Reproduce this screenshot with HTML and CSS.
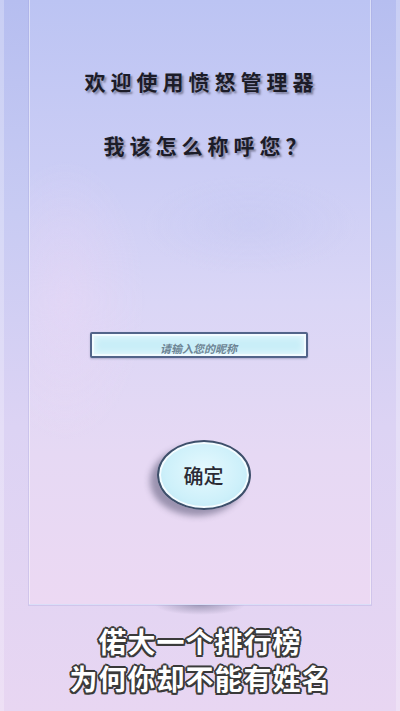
FILE: index.html
```html
<!DOCTYPE html>
<html lang="zh-CN">

<head>
    <meta charset="UTF-8">
    <meta name="viewport" content="width=device-width, initial-scale=1.0">
    <title>愤怒管理器</title>
    <link rel="stylesheet" href="styles.css">
</head>

<body>

    <div class="screen">
        <main class="panel">
            <h1 class="title">欢迎使用愤怒管理器</h1>
            <h2 class="question">我该怎么称呼您？</h2>

            <div class="name-box">
                <input type="text" class="name-input" placeholder="请输入您的昵称">
            </div>

            <div class="confirm-row">
                <button class="confirm">确定</button>
            </div>
        </main>

        <div class="panel-shadow"></div>

        <footer class="caption">
            <p>偌大一个排行榜</p>
            <p>为何你却不能有姓名</p>
        </footer>
    </div>

</body>

</html>
```

FILE: styles.css
```css
body {
    margin: 0;
    padding: 0;
    font-family: "Noto Sans CJK SC", "Noto Sans", sans-serif;
    background-color: #d4d0f2;
}

.screen {
    width: 400px;
    height: 711px;
    overflow: hidden;
    display: flex;
    flex-direction: column;
    align-items: center;
    background: linear-gradient(to bottom, #b6bef0 0%, #c8cbf3 30%, #dcd3f4 60%, #e8d6f2 100%);
    box-shadow: inset 4px 0 0 rgba(255, 255, 255, 0.25), inset -4px 0 0 rgba(255, 255, 255, 0.25);
}

.panel {
    box-sizing: border-box;
    width: 342px;
    height: 605px;
    margin-left: -1px;
    flex-shrink: 0;
    display: flex;
    flex-direction: column;
    align-items: center;
    border: 1px solid rgba(255, 255, 255, 0.45);
    border-top: none;
    box-shadow: 0 0 0 1px rgba(150, 150, 210, 0.25);
    background:
        radial-gradient(ellipse 110px 50px at 220px 225px, rgba(175, 185, 235, 0.18), transparent),
        radial-gradient(ellipse 80px 140px at 35px 300px, rgba(240, 215, 245, 0.35), transparent),
        linear-gradient(to bottom, #bcc4f3 0%, #cbcdf5 28%, #dad6f6 50%, #e6d9f4 75%, #ecd9f3 100%);
}

.title,
.question {
    margin: 0;
    font-size: 21px;
    font-weight: 700;
    letter-spacing: 5px;
    color: #1c1c28;
    text-shadow: 2px 2px 2px rgba(70, 70, 90, 0.55);
}

.title {
    margin-top: 66px;
    margin-left: 4px;
}

.question {
    margin-top: 34px;
    margin-left: 16px;
}

.name-box {
    margin-top: 172px;
    margin-left: -2px;
    width: 218px;
    height: 26px;
    box-sizing: border-box;
    border: 2px solid #52648a;
    border-radius: 2px;
    background: #c9eef8;
    box-shadow: inset 0 0 0 2px #f2fbff, inset 0 0 6px 3px #e8f8fd, 0 1px 2px rgba(60, 70, 110, 0.3);
}

.name-input {
    width: 100%;
    height: 100%;
    box-sizing: border-box;
    border: none;
    outline: none;
    background: transparent;
    text-align: center;
    font-family: "Noto Sans CJK SC", sans-serif;
    font-size: 11px;
    font-weight: 700;
    font-style: italic;
    padding: 0;
}

.name-input::placeholder {
    color: #6d8494;
}

.confirm-row {
    margin-top: 82px;
    margin-left: 8px;
    width: 120px;
    display: flex;
    justify-content: center;
}

.confirm {
    width: 94px;
    height: 70px;
    border-radius: 50%;
    border: 2px solid #3e4f6a;
    background: radial-gradient(ellipse at 50% 45%, #e6f9fe 0%, #cdf0fa 60%, #b5e2f2 100%);
    box-shadow: -7px 6px 6px rgba(60, 60, 90, 0.45), inset 0 0 0 2px #f4fcff;
    font-family: "Noto Sans CJK SC", sans-serif;
    font-size: 20px;
    font-weight: 500;
    color: #2a2a34;
    cursor: pointer;
    padding: 0;
}

.panel-shadow {
    width: 90px;
    height: 10px;
    flex-shrink: 0;
    border-radius: 0 0 50% 50%;
    background: radial-gradient(ellipse 45px 10px at 50% 0, rgba(110, 110, 140, 0.55), transparent);
}

.caption {
    margin-top: 8px;
    text-align: center;
}

.caption p {
    margin: 0;
    font-size: 28px;
    line-height: 37px;
    letter-spacing: 1px;
    font-weight: 700;
    color: #ffffff;
    text-shadow:
        -2px 0 0 #3a3a3a, 2px 0 0 #3a3a3a, 0 -2px 0 #3a3a3a, 0 2px 0 #3a3a3a,
        -1.5px -1.5px 0 #3a3a3a, 1.5px -1.5px 0 #3a3a3a, -1.5px 1.5px 0 #3a3a3a, 1.5px 1.5px 0 #3a3a3a;
}
```
